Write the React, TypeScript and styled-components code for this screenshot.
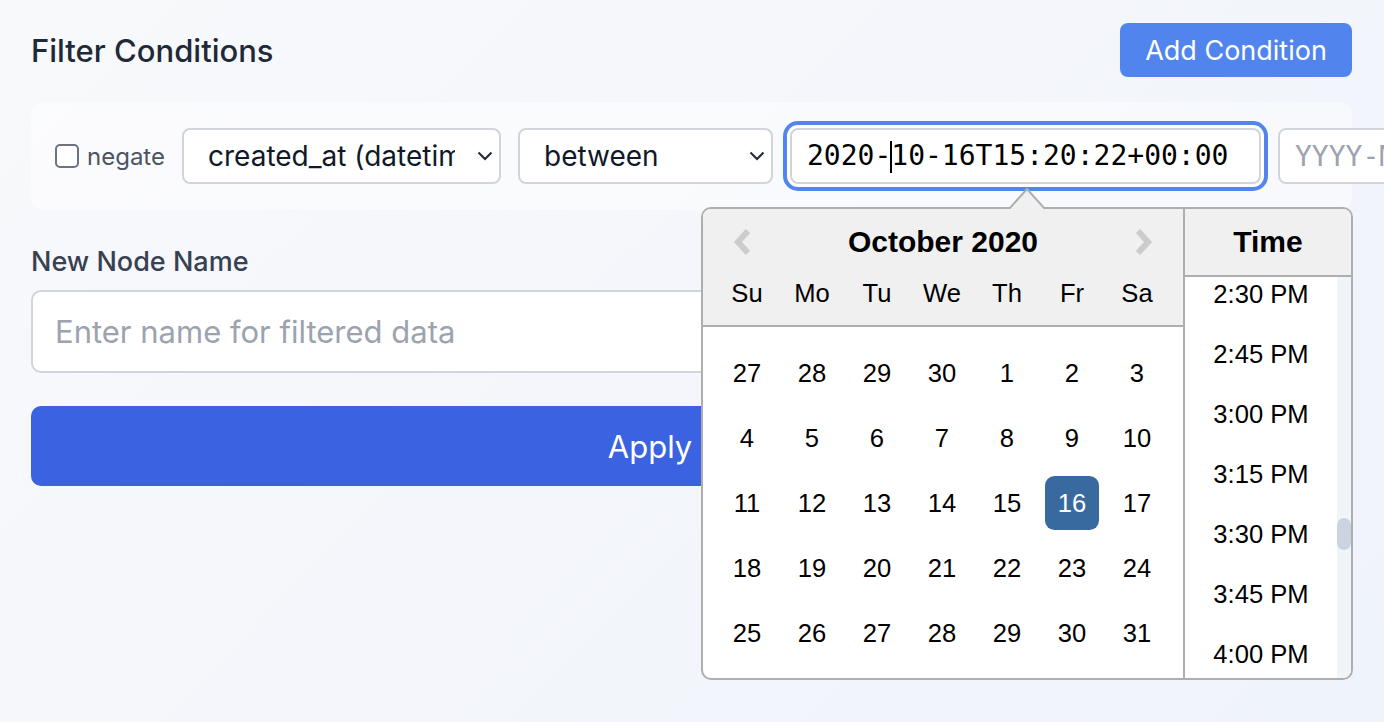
import React, { useLayoutEffect, useRef } from "react";
import styled, { createGlobalStyle } from "styled-components";

const GlobalStyle = createGlobalStyle`
  html, body { margin: 0; padding: 0; }
  body {
    width: 1384px;
    height: 722px;
    overflow: hidden;
    background: linear-gradient(135deg, #f8f9fb 0%, #eff3fb 100%);
    font-family: Inter, "Noto Sans", sans-serif;
  }
  * { box-sizing: border-box; }
`;

const Page = styled.div`
  padding: 23px 32px 0 31px;
`;

const HeaderRow = styled.div`
  display: flex;
  align-items: center;
  justify-content: space-between;
  height: 54px;
`;

const Title = styled.h2`
  margin: 0;
  font-size: 31px;
  font-weight: 500;
  color: #1f2937;
`;

const AddButton = styled.button`
  height: 54px;
  width: 232px;
  padding: 0;
  border: none;
  border-radius: 8px;
  background: #5185ed;
  color: #fff;
  font-family: Inter, sans-serif;
  font-size: 27px;
`;

const ConditionPanel = styled.div`
  margin-top: 25px;
  height: 108px;
  display: flex;
  align-items: center;
  gap: 17px;
  padding-left: 24px;
  border-radius: 12px;
  background: rgba(255, 255, 255, 0.45);
  & > * { flex-shrink: 0; }
`;

const NegateLabel = styled.label`
  display: flex;
  align-items: center;
  gap: 8px;
  font-size: 24px;
  color: #4b5563;
`;

const CheckBox = styled.input`
  appearance: none;
  margin: 0;
  width: 24px;
  height: 24px;
  border: 2px solid #6b7280;
  border-radius: 5px;
  background: #fff;
`;

const SelectBox = styled.div<{ $w: number }>`
  display: flex;
  align-items: center;
  gap: 22px;
  width: ${(p) => p.$w}px;
  height: 56px;
  padding: 0 6px 0 24px;
  border: 2px solid #d1d5db;
  border-radius: 8px;
  background: #fff;
  font-size: 28px;
  color: #111827;
`;

const SelectText = styled.span`
  flex: 1;
  min-width: 0;
  overflow: hidden;
  white-space: nowrap;
`;

const DateField = styled.div<{ $focused?: boolean; $w: number }>`
  position: relative;
  display: flex;
  align-items: center;
  width: ${(p) => p.$w}px;
  height: 56px;
  padding-left: 15px;
  border: 2px solid #d1d5db;
  border-radius: 8px;
  background: #fff;
  font-family: "DejaVu Sans Mono", "Liberation Mono", monospace;
  font-size: 28px;
  white-space: nowrap;
  color: ${(p) => (p.$focused ? "#000" : "#9ca3af")};
  box-shadow: ${(p) => (p.$focused ? "0 0 0 3px #fff, 0 0 0 7px #5286ee" : "none")};
`;

const Caret = styled.span`
  display: inline-block;
  width: 2px;
  height: 32px;
  margin: 0 -1px;
  background: #000;
  vertical-align: middle;
`;

const Popup = styled.div`
  position: absolute;
  top: 77px;
  left: -91px;
  z-index: 10;
  display: flex;
  width: 652px;
  height: 473px;
  border: 2px solid #aeaeae;
  border-radius: 10px;
  background: #fff;
  font-family: "Liberation Sans", Arial, sans-serif;
  color: #000;
`;

const Triangle = styled.svg`
  position: absolute;
  top: -22px;
  left: 306px;
`;

const Month = styled.div`
  width: 480px;
  display: flex;
  flex-direction: column;
`;

const MonthHeader = styled.div`
  background: #f0f0f0;
  border-bottom: 2px solid #aeaeae;
  border-top-left-radius: 8px;
  padding: 16px 0 5px;
`;

const NavRow = styled.div`
  display: flex;
  align-items: center;
  justify-content: space-between;
  height: 34px;
  padding: 0 28px;
`;

const MonthTitle = styled.div`
  font-size: 30px;
  font-weight: 700;
  line-height: 34px;
`;

const DayGrid = styled.div<{ $head?: boolean }>`
  display: grid;
  grid-template-columns: repeat(7, 54px);
  column-gap: 11px;
  row-gap: 11px;
  padding: ${(p) => (p.$head ? "0 0 0 17px" : "19px 0 18px 17px")};
  margin-top: ${(p) => (p.$head ? "7px" : "0")};
`;

const DayCell = styled.div<{ $selected?: boolean }>`
  height: 54px;
  line-height: 54px;
  text-align: center;
  font-size: 25.6px;
  border-radius: 9.6px;
  background: ${(p) => (p.$selected ? "#38699f" : "transparent")};
  color: ${(p) => (p.$selected ? "#fff" : "#000")};
`;

const TimeColumn = styled.div`
  position: relative;
  width: 168px;
  border-left: 2px solid #aeaeae;
  display: flex;
  flex-direction: column;
  border-top-right-radius: 8px;
  border-bottom-right-radius: 8px;
  overflow: hidden;
`;

const TimeHeader = styled.div`
  height: 68px;
  line-height: 66px;
  border-bottom: 2px solid #aeaeae;
  background: #f0f0f0;
  text-align: center;
  font-size: 30px;
  font-weight: 700;
`;

const TimeList = styled.ul`
  height: 401px;
  margin: 0;
  padding: 0;
  list-style: none;
  overflow-y: scroll;
  scrollbar-width: none;
  &::-webkit-scrollbar { display: none; }
`;

const TimeItem = styled.li`
  height: 60px;
  line-height: 60px;
  padding: 0 14px 0 0;
  text-align: center;
  font-size: 25.6px;
  white-space: nowrap;
`;

const ScrollTrack = styled.div`
  position: absolute;
  top: 68px;
  right: 0;
  bottom: 0;
  width: 14px;
  background: #f1f4f9;
`;

const ScrollThumb = styled.div`
  position: absolute;
  top: 241px;
  left: 0;
  width: 14px;
  height: 32px;
  border-radius: 7px;
  background: #cbd5e1;
`;

const LowerSection = styled.div`
  width: 1238px;
  margin-top: 32px;
`;

const FieldLabel = styled.label`
  display: block;
  font-size: 27px;
  font-weight: 500;
  line-height: 40px;
  color: #374151;
  margin-bottom: 8px;
`;

const NameInput = styled.input`
  display: block;
  width: 100%;
  height: 83px;
  padding: 0 22px;
  border: 2px solid #d1d5db;
  border-radius: 10px;
  background: #fff;
  font-family: Inter, sans-serif;
  font-size: 31px;
  outline: none;
  &::placeholder { color: #9ca3af; }
`;

const ApplyButton = styled.button`
  display: block;
  margin-top: 33px;
  width: 100%;
  height: 80px;
  border: none;
  border-radius: 10px;
  background: #3b63e1;
  color: #fff;
  font-family: Inter, sans-serif;
  font-size: 31px;
`;

const ChevronDown = () => (
  <svg width="16" height="10" viewBox="0 0 16 10" fill="none">
    <polyline points="1.5,1.5 8,8 14.5,1.5" stroke="#1f2937" strokeWidth="2" />
  </svg>
);

const NavArrow = ({ dir }: { dir: "prev" | "next" }) => (
  <svg width="24" height="28" viewBox="0 0 24 28" fill="none">
    {dir === "prev" ? (
      <polyline points="17,3 7,14 17,25" stroke="#cccccc" strokeWidth="6" strokeLinejoin="miter" />
    ) : (
      <polyline points="7,3 17,14 7,25" stroke="#cccccc" strokeWidth="6" strokeLinejoin="miter" />
    )}
  </svg>
);

const dayNames = ["Su", "Mo", "Tu", "We", "Th", "Fr", "Sa"];
const days: number[] = [27, 28, 29, 30, ...Array.from({ length: 31 }, (_, i) => i + 1)];

const times: string[] = Array.from({ length: 96 }, (_, i) => {
  const h24 = Math.floor(i / 4);
  const m = (i % 4) * 15;
  const h = h24 % 12 === 0 ? 12 : h24 % 12;
  return `${h}:${m.toString().padStart(2, "0")} ${h24 < 12 ? "AM" : "PM"}`;
});

export default function App() {
  const listRef = useRef<HTMLUListElement>(null);
  useLayoutEffect(() => {
    if (listRef.current) listRef.current.scrollTop = 58 * 60 + 13;
  }, []);

  return (
    <>
      <GlobalStyle />
      <Page>
        <HeaderRow>
          <Title>Filter Conditions</Title>
          <AddButton>Add Condition</AddButton>
        </HeaderRow>

        <ConditionPanel>
          <NegateLabel>
            <CheckBox type="checkbox" />
            negate
          </NegateLabel>
          <SelectBox $w={319}>
            <SelectText>created_at (datetime)</SelectText>
            <ChevronDown />
          </SelectBox>
          <SelectBox $w={255}>
            <SelectText>between</SelectText>
            <ChevronDown />
          </SelectBox>
          <DateField $focused $w={471}>
            <span>
              2020-<Caret />10-16T15:20:22+00:00
            </span>
            <Popup>
              <Triangle width="36" height="22" viewBox="0 0 36 22">
                <path d="M0 22 L18 2 L36 22" fill="#f0f0f0" stroke="#aeaeae" strokeWidth="2" />
              </Triangle>
              <Month>
                <MonthHeader>
                  <NavRow>
                    <NavArrow dir="prev" />
                    <MonthTitle>October 2020</MonthTitle>
                    <NavArrow dir="next" />
                  </NavRow>
                  <DayGrid $head>
                    {dayNames.map((d) => (
                      <DayCell key={d}>{d}</DayCell>
                    ))}
                  </DayGrid>
                </MonthHeader>
                <DayGrid>
                  {days.map((d, i) => (
                    <DayCell key={i} $selected={i === 19}>
                      {d}
                    </DayCell>
                  ))}
                </DayGrid>
              </Month>
              <TimeColumn>
                <TimeHeader>Time</TimeHeader>
                <TimeList ref={listRef}>
                  {times.map((t) => (
                    <TimeItem key={t}>{t}</TimeItem>
                  ))}
                </TimeList>
                <ScrollTrack>
                  <ScrollThumb />
                </ScrollTrack>
              </TimeColumn>
            </Popup>
          </DateField>
          <DateField $w={300}>YYYY-MM-DDTHH:mm:ssZ</DateField>
        </ConditionPanel>

        <LowerSection>
          <FieldLabel>New Node Name</FieldLabel>
          <NameInput placeholder="Enter name for filtered data" />
          <ApplyButton>Apply</ApplyButton>
        </LowerSection>
      </Page>
    </>
  );
}
